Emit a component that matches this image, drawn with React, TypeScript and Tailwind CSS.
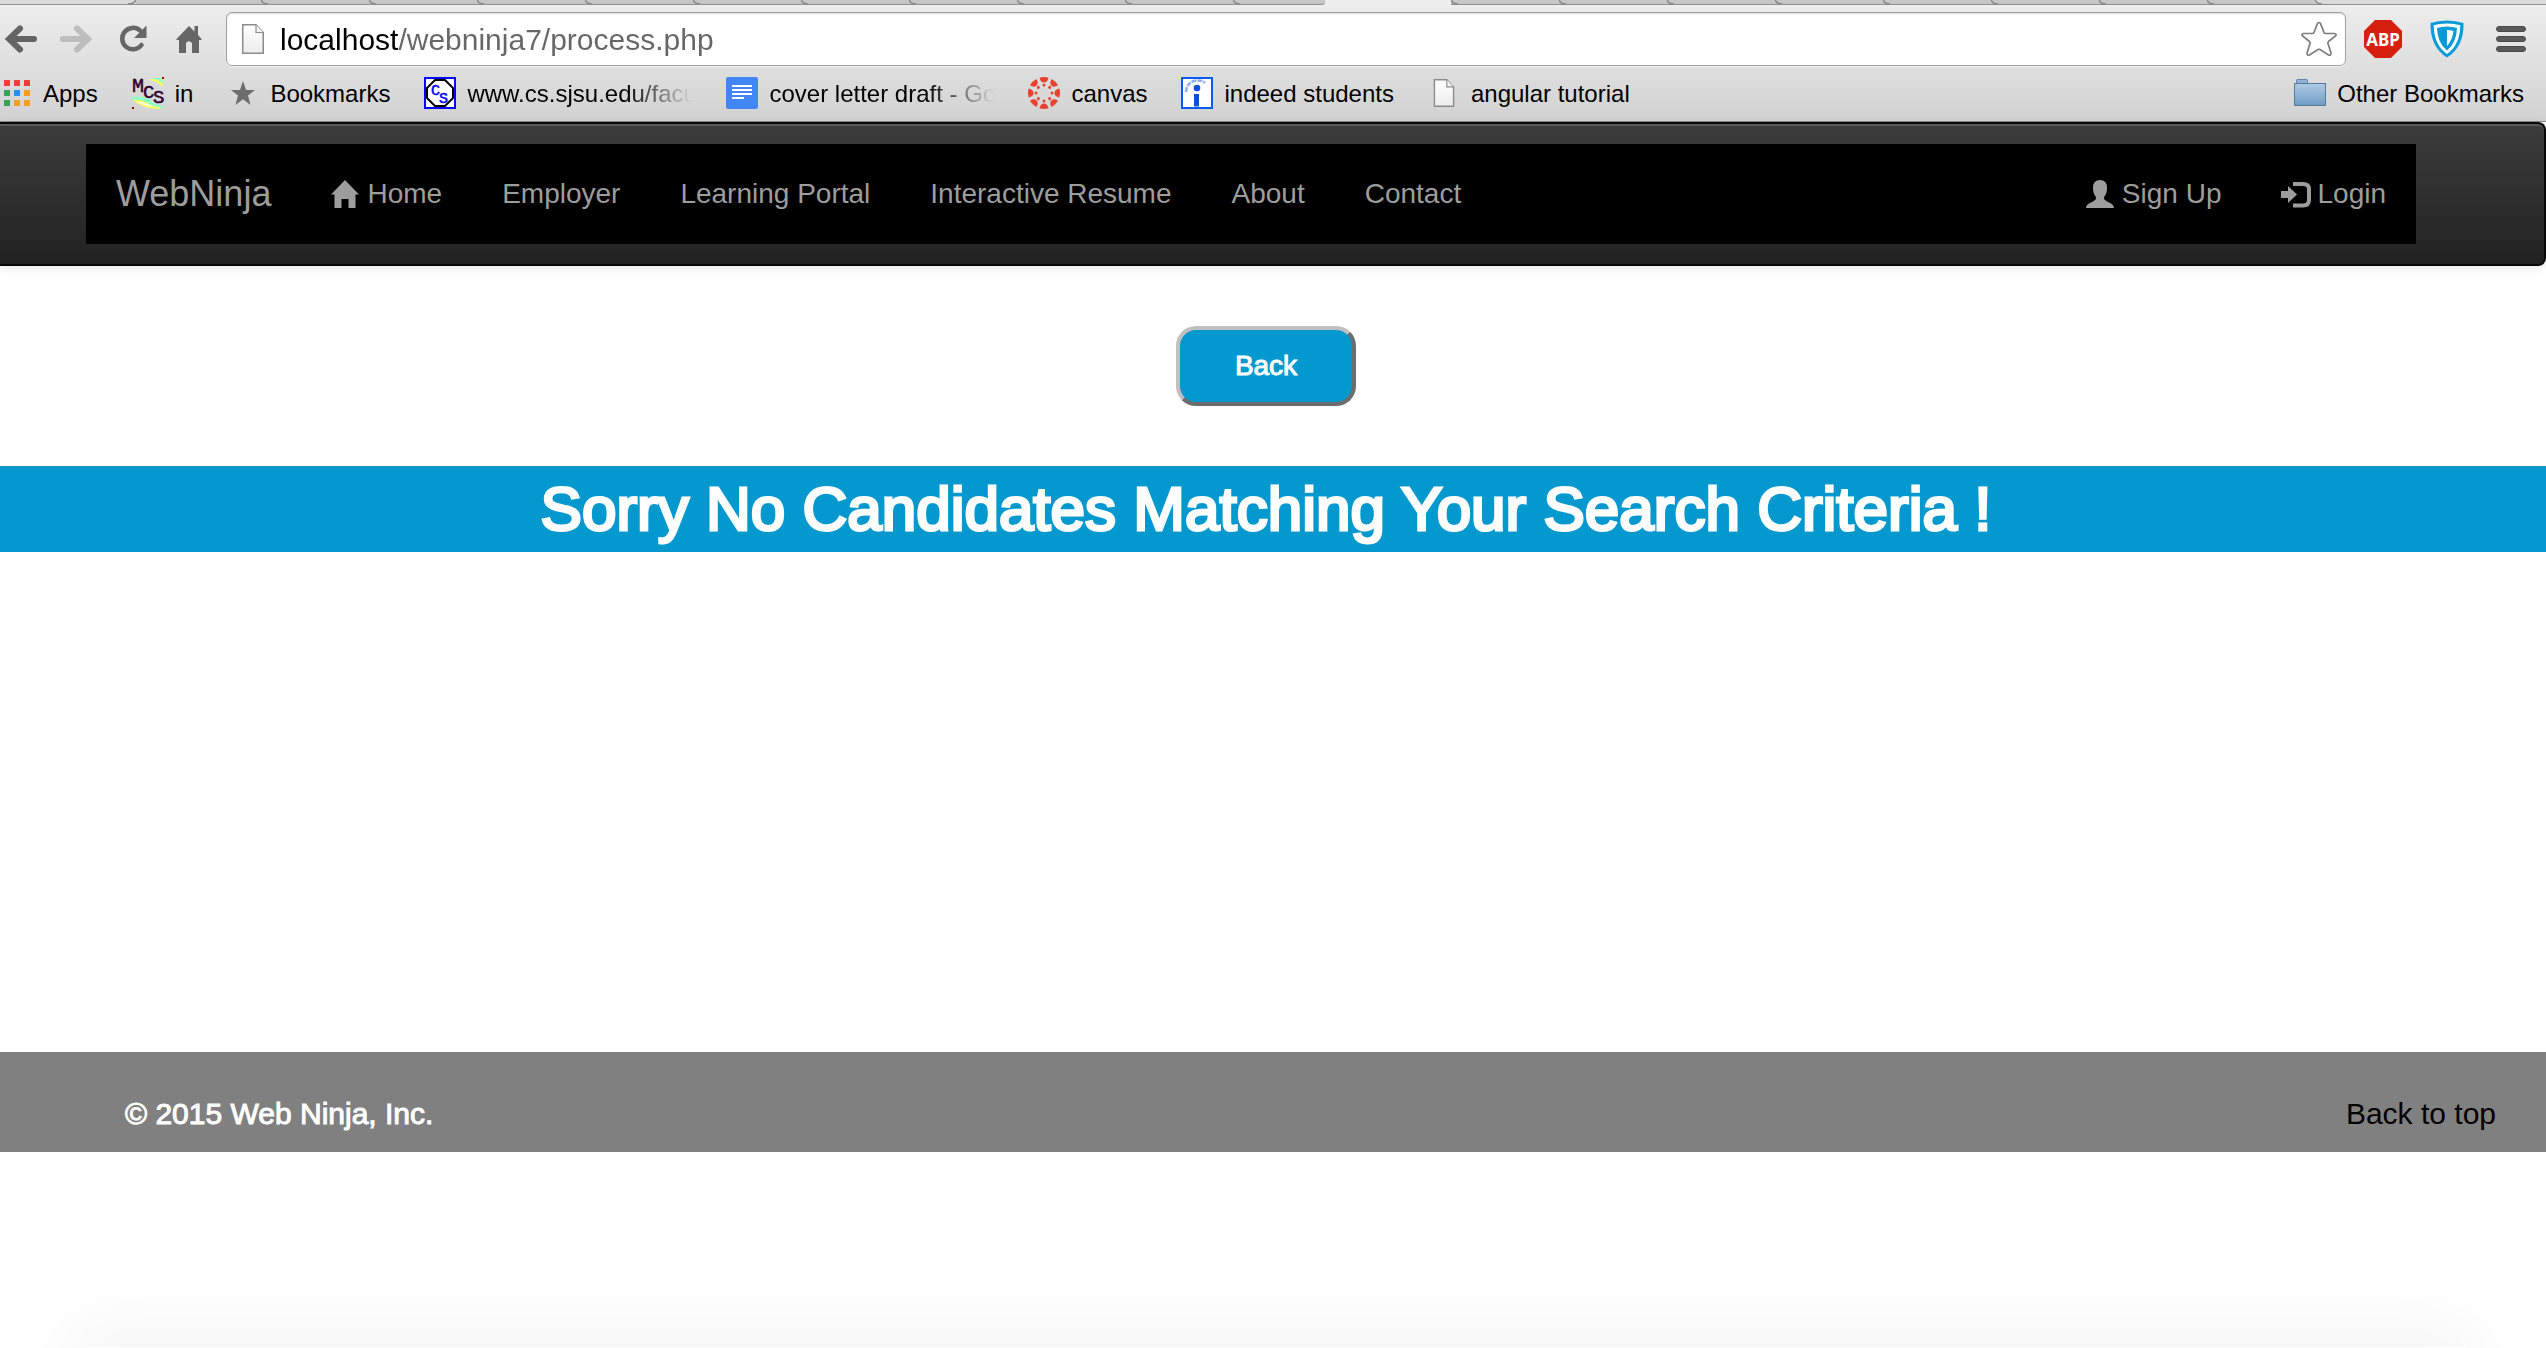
import React from "react";

const PAGE_LINKS = ["Employer", "Learning Portal", "Interactive Resume", "About", "Contact"];
const LEFT_TABS = Array.from({ length: 9 }, (_, i) => i);
const RIGHT_TABS = Array.from({ length: 8 }, (_, i) => i);

function TabEdge() {
  return (
    <svg viewBox="0 0 8 4" className="h-1 w-2" aria-hidden="true">
      <path d="M0 0Q2 4 7 4" fill="none" stroke="#858585" strokeWidth="1.5" />
    </svg>
  );
}

function TabStrip() {
  return (
    <div className="flex h-[5px] overflow-hidden bg-[#dadada]" aria-hidden="true">
      <div className="flex w-[136px] shrink-0 justify-end border-b border-[#8e8e8e]">
        <svg viewBox="0 0 8 4" className="h-1 w-2">
          <path d="M8 0Q6 4 0 4" fill="none" stroke="#858585" strokeWidth="1.5" />
        </svg>
      </div>
      <div className="w-[125px] shrink-0 border-b border-[#8e8e8e] bg-[#c6c6c6]" />
      {LEFT_TABS.map((i) => (
        <div key={i} className="w-[108px] shrink-0 border-b border-[#8e8e8e] bg-[#c6c6c6]">
          <TabEdge />
        </div>
      ))}
      <div className="w-[92px] shrink-0 rounded-br-sm border-b border-[#8e8e8e] bg-[#c6c6c6]">
        <TabEdge />
      </div>
      <div className="w-[126px] shrink-0 bg-[#ededed]" />
      {RIGHT_TABS.map((i) => (
        <div key={i} className="w-[108px] shrink-0 border-b border-[#8e8e8e] bg-[#c6c6c6]">
          <TabEdge />
        </div>
      ))}
      <div className="grow border-b border-[#8e8e8e]">
        <TabEdge />
      </div>
    </div>
  );
}

function ArrowIcon({ color, flip }: { color: string; flip?: boolean }) {
  return (
    <svg viewBox="0 0 32 28" className={flip ? "h-7 w-8 rotate-180" : "h-7 w-8"} aria-hidden="true">
      <path d="M15 3.5L4 14L15 24.5M4.500 14H29" fill="none" stroke={color} strokeWidth="6" strokeLinecap="round" strokeLinejoin="miter" />
    </svg>
  );
}

function ReloadIcon() {
  return (
    <svg viewBox="0 0 28 28" className="size-7" aria-hidden="true">
      <path d="M22.500 20A10.700 10.700 0 1 1 21 5.500" fill="none" stroke="#666" strokeWidth="4.500" strokeLinecap="round" />
      <path d="M27.500 0.500V13H15Z" fill="#666" />
    </svg>
  );
}

function ChromeHomeIcon() {
  return (
    <svg viewBox="0 0 26 28" className="h-7 w-[26px]" aria-hidden="true">
      <path d="M13 1L18.500 6.500V1H22V10L25.500 14V15H23V28H16V18Q13 14.500 10 18V28H3V15H0.500V14Z" fill="#666" />
    </svg>
  );
}

function PageIcon({ className }: { className: string }) {
  return (
    <svg viewBox="0 0 22 30" className={className} aria-hidden="true">
      <defs>
        <linearGradient id="sheet" x1="0" y1="0" x2="0" y2="1">
          <stop offset="0" stopColor="#fff" />
          <stop offset="1" stopColor="#ececec" />
        </linearGradient>
      </defs>
      <path d="M0.750 0.750H14L21.250 8.500V29.250H0.750Z" fill="url(#sheet)" stroke="#8b8b8b" strokeWidth="1.500" />
      <path d="M14 0.750V8.500H21.250" fill="#f4f4f4" stroke="#8b8b8b" strokeWidth="1.200" />
    </svg>
  );
}

function OutlineStar() {
  return (
    <svg viewBox="0 0 36 36" className="size-9" aria-hidden="true">
      <path
        d="M16.500 2.500Q18 0.500 19.500 2.500L23 11.500Q23.300 12.500 24.500 12.500L33.500 12.500Q36 13 34.500 15L27.500 20.500Q26.500 21.500 27 22.500L30 32Q30 35 27.500 34L19 28.500Q18 28 17 28.500L8.500 34Q6 35 6 32L9 22.500Q9.500 21.500 8.500 20.500L1.500 15Q0 13 2.500 12.500L11.500 12.500Q12.700 12.500 13 11.500Z"
        fill="#fff"
        stroke="#7d7d7d"
        strokeWidth="1.700"
      />
    </svg>
  );
}

function AdBlockIcon() {
  return (
    <svg viewBox="0 0 38 38" className="size-[38px]" aria-hidden="true">
      <path d="M11 0H27L38 11V27L27 38H11L0 27V11Z" fill="#d71f10" />
      <text x="19" y="26" textAnchor="middle" fill="#fff" fontSize="17" fontWeight="700" fontFamily="Noto Sans, sans-serif">ABP</text>
    </svg>
  );
}

function ShieldIcon() {
  return (
    <svg viewBox="0 0 34 38" className="h-[38px] w-[34px]" aria-hidden="true">
      <path d="M17 0.500Q26 0.500 33.500 3Q34 27 17 37.500Q0 27 0.500 3Q8 0.500 17 0.500Z" fill="#089bd8" />
      <path d="M17 3.500Q25 3.500 30.300 5.300Q30 25 17 34Q4 25 3.700 5.300Q9 3.500 17 3.500Z" fill="#fff" />
      <path d="M17 6.500Q23 6.500 27 8Q26.500 23 17 30.500Q7.500 23 7 8Q11 6.500 17 6.500Z" fill="#089bd8" />
      <path d="M17 10Q20.500 10 23.500 11Q22.500 20 17 26Z" fill="#fff" />
    </svg>
  );
}

function MenuIcon() {
  return (
    <svg viewBox="0 0 30 26" className="h-[26px] w-[30px]" aria-hidden="true">
      <g fill="#5a5a5a" stroke="#4a4a4a">
        <rect x="0.500" y="0.500" width="29" height="5" rx="2.500" />
        <rect x="0.500" y="10.500" width="29" height="5" rx="2.500" />
        <rect x="0.500" y="20.500" width="29" height="5" rx="2.500" />
      </g>
    </svg>
  );
}

function AddressBar() {
  return (
    <div className="flex items-center pl-[5px] pr-5">
      <div className="flex w-[221px] shrink-0 items-center">
        <button aria-label="Back to previous page" className="mr-[23px]"><ArrowIcon color="#646464" /></button>
        <button aria-label="Forward" className="mr-[27px]"><ArrowIcon color="#bdbdbd" flip /></button>
        <button aria-label="Reload" className="mr-[29px]"><ReloadIcon /></button>
        <button aria-label="Home page"><ChromeHomeIcon /></button>
      </div>
      <div className="flex h-[54px] min-w-0 grow items-center rounded-md border border-[#a0a0a0] bg-white pl-[15px] pr-2 shadow-[inset_0_1px_1px_#ddd,0_1px_0_#f2f2f2]">
        <PageIcon className="h-[30px] w-[22px] shrink-0" />
        <input
          aria-label="Address"
          defaultValue="localhost/webninja7/process.php"
          className="ml-4 min-w-0 grow bg-[linear-gradient(90deg,#000_118px,#666_118px)] bg-clip-text pt-0.5 text-[30px] leading-9 text-transparent outline-none"
        />
        <button aria-label="Bookmark this page"><OutlineStar /></button>
      </div>
      <div className="flex items-center pl-[18px]">
        <button aria-label="Adblock Plus"><AdBlockIcon /></button>
        <button aria-label="Shield" className="ml-7"><ShieldIcon /></button>
        <button aria-label="Menu" className="ml-8"><MenuIcon /></button>
      </div>
    </div>
  );
}

function AppsIcon() {
  return (
    <svg viewBox="0 0 32 32" className="size-8" aria-hidden="true" shapeRendering="crispEdges">
      <path d="M4 3h6v6H4zM14 3h6v6h-6zM24 3h6v6h-6z" fill="#f83b37" />
      <path d="M4 13h6v6H4zM4 23h6v6H4z" fill="#37a05a" />
      <path d="M14 13h6v6h-6z" fill="#2a8df5" />
      <path d="M24 13h6v6h-6zM14 23h6v6h-6zM24 23h6v6h-6z" fill="#f3a022" />
    </svg>
  );
}

function McsIcon() {
  return (
    <svg viewBox="0 0 32 32" className="size-8 overflow-visible" aria-hidden="true">
      <path d="M17 3Q24 0 31 2V10Q25 4 17 3Z" fill="#ffff55" />
      <path d="M20 1H28L31 4V7Q26 2 20 2Z" fill="#8dffc8" />
      <path d="M1 21Q12 19 18 25Q25 30 30 29L28 32Q10 31 2 24Z" fill="#ffff55" />
      <path d="M0 20Q12 18 18 23Q25 29 32 29V31Q20 30 14 25Q7 22 0 23Z" fill="#8dffc8" />
      <path d="M6 25L19 29" stroke="#fff" strokeWidth="1.500" />
      <g fill="#33002f" stroke="#33002f" strokeWidth="0.500" fontFamily="Liberation Mono, monospace">
        <text x="0" y="15" fontSize="20">M</text>
        <text x="11" y="21" fontSize="19">C</text>
        <text x="21" y="26" fontSize="19">S</text>
      </g>
      <path d="M30 0h2v2h-2zM0 30h2v2H0z" fill="#a00000" />
    </svg>
  );
}

function StarIcon() {
  return (
    <svg viewBox="0 0 32 32" className="size-8" aria-hidden="true">
      <path d="M16 4L19.100 13H28L21 18.500L23.500 28L16 22.300L8.500 28L11 18.500L4 13H12.900Z" fill="#6d6d6d" />
    </svg>
  );
}

function CsIcon() {
  return (
    <svg viewBox="0 0 32 32" className="size-8" aria-hidden="true">
      <rect x="1" y="1" width="30" height="30" fill="#fff" stroke="#00f" strokeWidth="2" />
      <path d="M11 3H21L29 11V21L21 29H11L3 21V11Z" fill="#fff" stroke="#000" strokeWidth="2" strokeLinejoin="round" />
      <g fill="#00f" stroke="#00f" strokeWidth="0.500" fontFamily="Liberation Mono, monospace" fontSize="15">
        <text x="7" y="18">C</text>
        <text x="15" y="26">S</text>
      </g>
    </svg>
  );
}

function DocIcon() {
  return (
    <svg viewBox="0 0 32 32" className="size-8" aria-hidden="true">
      <rect width="32" height="32" rx="2" fill="#4285f4" />
      <path d="M6 9H26M6 13H26M6 17H26M6 21H18" stroke="#fff" strokeWidth="2" />
    </svg>
  );
}

function CanvasIcon() {
  const angles = [0, 45, 90, 135, 180, 225, 270, 315];
  return (
    <svg viewBox="0 0 32 32" className="size-8" aria-hidden="true">
      <g fill="#e8412f">
        {angles.map((a) => (
          <g key={a} transform={`rotate(${a} 16 16)`}>
            <path d="M11.500 0.700Q16 -0.700 20.500 0.700Q19.500 5.500 16 5.500Q12.500 5.500 11.500 0.700Z" />
            <circle cx="16" cy="8" r="1.500" />
          </g>
        ))}
      </g>
    </svg>
  );
}

function IndeedIcon() {
  return (
    <svg viewBox="0 0 32 32" className="size-8" aria-hidden="true">
      <rect x="1" y="1" width="30" height="30" fill="#fff" stroke="#0a5cf0" strokeWidth="2" />
      <path d="M5 15Q6 4 16 3.500Q21 3 24 6" fill="none" stroke="#8fb0ea" strokeWidth="2.500" strokeDasharray="5 1" />
      <circle cx="16" cy="11" r="3.300" fill="#0a50d8" />
      <path d="M13 17H18V29.500H13Z" fill="#0a50d8" />
    </svg>
  );
}

function FolderIcon() {
  return (
    <svg viewBox="0 0 32 32" className="size-8" aria-hidden="true">
      <defs>
        <linearGradient id="folder" x1="0" y1="0" x2="0" y2="1">
          <stop offset="0" stopColor="#b0cbe4" />
          <stop offset="1" stopColor="#6e9cc6" />
        </linearGradient>
      </defs>
      <path d="M2.500 8V3.500Q2.500 2.500 3.500 2.500H12.500Q13.500 2.500 13.500 3.500V8" fill="#8fb2d6" stroke="#6284a8" />
      <rect x="0.500" y="6.500" width="31" height="22" fill="url(#folder)" stroke="#58799c" />
    </svg>
  );
}

function Bookmark({ icon, label, faded }: { icon: React.ReactNode; label: string; faded?: boolean }) {
  return (
    <a href="#" className="flex shrink-0 items-center gap-[11px] whitespace-nowrap text-2xl text-black">
      {icon}
      {faded ? (
        <span className="w-[225px] pt-0.5 [mask-image:linear-gradient(90deg,#000_70%,transparent)]">{label}</span>
      ) : (
        <span className="pt-0.5">{label}</span>
      )}
    </a>
  );
}

function BookmarksBar() {
  return (
    <nav aria-label="Bookmarks" className="flex h-8 items-center justify-between pr-[22px]">
      <div className="flex items-center gap-[34px]">
        <Bookmark icon={<AppsIcon />} label="Apps" />
        <Bookmark icon={<McsIcon />} label="in" />
        <Bookmark icon={<StarIcon />} label="Bookmarks" />
        <Bookmark icon={<CsIcon />} label="www.cs.sjsu.edu/facu" faded />
        <Bookmark icon={<DocIcon />} label="cover letter draft - Go" faded />
        <Bookmark icon={<CanvasIcon />} label="canvas" />
        <Bookmark icon={<IndeedIcon />} label="indeed students" />
        <Bookmark icon={<div className="flex w-8 justify-center"><PageIcon className="h-7 w-[22px]" /></div>} label="angular tutorial" />
      </div>
      <Bookmark icon={<FolderIcon />} label="Other Bookmarks" />
    </nav>
  );
}

function HomeIcon() {
  return (
    <svg viewBox="0 0 28 28" className="size-7" aria-hidden="true">
      <path d="M14 0L28 14.500H24.500V28H17.500V19H10.500V28H3.500V14.500H0Z" fill="currentColor" />
    </svg>
  );
}

function UserIcon() {
  return (
    <svg viewBox="0 0 28 28" className="size-7" aria-hidden="true">
      <path d="M14 0Q21 0 21 8Q21 14 18 17V19Q20 21.500 24 23Q28 25 28 28H0Q0 25 4 23Q8 21.500 10 19V17Q7 14 7 8Q7 0 14 0Z" fill="currentColor" />
    </svg>
  );
}

function LoginIcon() {
  return (
    <svg viewBox="0 0 30 28" className="h-7 w-[30px]" aria-hidden="true">
      <path d="M0 11H7V6L16 14.500L7 23V18H0Z" fill="currentColor" />
      <path d="M12 4H22Q28 4 28 9V20Q28 25.500 22 25.500H12" fill="none" stroke="currentColor" strokeWidth="4" />
    </svg>
  );
}

function SiteNav() {
  return (
    <header className="rounded-r-lg border-y-2 border-r-2 border-[#080808] bg-linear-to-b from-[#3c3c3c] to-[#222] pb-5 pl-[86px] pr-32 pt-5 shadow-[inset_0_2px_0_rgba(255,255,255,0.15),0_2px_10px_rgba(0,0,0,0.1)]">
      <nav aria-label="Site" className="flex h-[100px] items-center justify-between bg-black px-[30px] text-[28px] leading-10 text-[#9d9d9d]">
        <div className="flex items-center gap-[60px]">
          <a href="#" className="text-4xl">WebNinja</a>
          <a href="#" className="flex items-center gap-2"><HomeIcon />Home</a>
          {PAGE_LINKS.map((label) => (
            <a key={label} href="#">{label}</a>
          ))}
        </div>
        <div className="flex items-center gap-[60px]">
          <a href="#" className="flex items-center gap-2"><UserIcon />Sign Up</a>
          <a href="#" className="flex items-center gap-1.5"><LoginIcon />Login</a>
        </div>
      </nav>
    </header>
  );
}

export default function App() {
  return (
    <div className="flex min-h-screen flex-col overflow-hidden bg-white font-['Liberation_Sans',Arial,sans-serif]">
      <TabStrip />
      <div className="flex flex-col gap-[11px] border-b border-[#8a8a8a] bg-linear-to-b from-[#ededed] to-[#d2d2d2] pb-3 pt-[7px]">
        <AddressBar />
        <BookmarksBar />
      </div>
      <SiteNav />
      <main className="flex flex-col items-center pt-[60px]">
        <div className="flex w-full justify-center pr-[14px]">
          <button className="h-20 w-[180px] rounded-[20px] border-4 border-b-[#6d6d6d] border-l-[#c0c0c0] border-r-[#6d6d6d] border-t-[#c0c0c0] bg-[#0399cf] text-[28px] text-white [-webkit-text-stroke:1px_#fff]">
            Back
          </button>
        </div>
        <h1 className="mt-[60px] w-full bg-[#0399cf] pb-[9px] pr-[14px] pt-[9px] text-center text-[62px] leading-[68px] text-white [-webkit-text-stroke:3px_#fff]">
          Sorry No Candidates Matching Your Search Criteria !
        </h1>
      </main>
      <footer className="mt-[500px] flex h-[100px] items-center justify-between bg-[#808080] pl-[125px] pr-[50px] pt-6 text-[30px] leading-10">
        <p className="text-white [-webkit-text-stroke:1px_#fff]">© 2015 Web Ninja, Inc.</p>
        <a href="#" className="text-black">Back to top</a>
      </footer>
      <div className="flex grow flex-col justify-end px-20" aria-hidden="true">
        <div className="h-px shadow-[0_10px_70px_10px_rgba(0,0,0,0.13)]" />
      </div>
    </div>
  );
}
